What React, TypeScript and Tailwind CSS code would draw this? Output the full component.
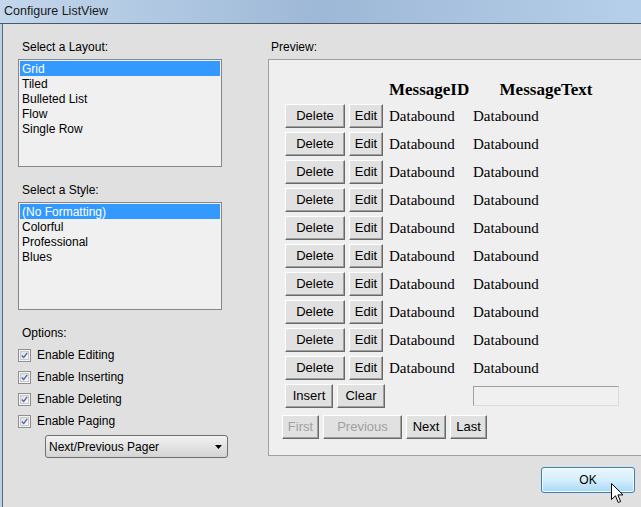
import React from 'react';

const ui = { fontFamily: '"Liberation Sans", Arial, sans-serif' };
const serif = { fontFamily: '"Liberation Serif", "Times New Roman", serif' };

const layouts = ['Grid', 'Tiled', 'Bulleted List', 'Flow', 'Single Row'];
const styles = ['(No Formatting)', 'Colorful', 'Professional', 'Blues'];
const options = ['Enable Editing', 'Enable Inserting', 'Enable Deleting', 'Enable Paging'];

const ListBox: React.FC<{ items: string[] }> = ({ items }) => (
  <div className="w-[204px] h-[108px] border border-[#828790] bg-[#f0f0f0] p-px">
    {items.map((item, i) => (
      <div
        key={item}
        className={`h-[15px] leading-[16px] pl-[2px] text-[12px] ${i === 0 ? 'bg-[#3399ff] text-white' : 'text-black'}`}
      >
        {item}
      </div>
    ))}
  </div>
);

const CheckBox: React.FC = () => (
  <div className="w-[13px] h-[13px] border border-[#8f8f8f] bg-[#f4f4f4] flex items-center justify-center shrink-0">
    <div className="w-[9px] h-[9px] border border-[#c9c9c9] bg-linear-to-br from-[#dcdcdc] to-[#fbfbfb] flex items-center justify-center">
      <svg width="9" height="9" viewBox="0 0 9 9">
        <path d="M1 4.5 L3.5 7 L8 1" fill="none" stroke="#4a62b0" strokeWidth="1.6" />
      </svg>
    </div>
  </div>
);

// classic outset button as shown in the designer preview
const Btn: React.FC<{ w: string; label: string; disabled?: boolean; cls?: string }> = ({ w, label, disabled, cls }) => (
  <div
    className={`${w} ${cls ?? ''} h-[24px] shrink-0 flex items-center justify-center bg-[#e1e1e1] border border-t-white border-l-white border-r-[#696969] border-b-[#696969] shadow-[inset_-1px_-1px_0_#a0a0a0] text-[13px] ${disabled ? 'text-[#a0a0a0]' : 'text-black'}`}
  >
    {label}
  </div>
);

const App: React.FC = () => {
  return (
    <div className="w-[641px] h-[507px] overflow-hidden relative flex flex-col bg-[#e0e0e0]" style={ui}>
      {/* title bar */}
      <div className="h-[24px] shrink-0 border-b border-[#4d5866] bg-linear-to-r from-[#c3d7ed] via-[#9db8d6] to-[#b6cfea] flex items-center pl-[4px]">
        <span className="text-[12.5px] text-[#1a1a1a]">Configure ListView</span>
      </div>

      <div className="flex-1 flex">
        <div className="w-[2px] bg-[#bcd0e6] shrink-0" />
        <div className="w-px bg-[#5d6673] shrink-0" />

        <div className="flex-1 flex flex-col min-w-0">
          <div className="flex">
            {/* left column */}
            <div className="w-[265px] shrink-0 pl-[15px] pt-[16px] flex flex-col text-black">
              <div className="h-[15px] leading-[15px] text-[12px] pl-[4px]">Select a Layout:</div>
              <div className="mt-[4px]">
                <ListBox items={layouts} />
              </div>
              <div className="mt-[16px] h-[15px] leading-[15px] text-[12px] pl-[4px]">Select a Style:</div>
              <div className="mt-[4px]">
                <ListBox items={styles} />
              </div>
              <div className="mt-[16px] h-[15px] leading-[15px] text-[12px] pl-[4px]">Options:</div>
              {options.map((o) => (
                <div key={o} className="mt-[6px] h-[16px] flex items-center gap-[6px]">
                  <CheckBox />
                  <span className="text-[12px]">{o}</span>
                </div>
              ))}
              <div className="mt-[6px] ml-[27px] w-[183px] h-[23px] rounded-[3px] border border-[#707070] bg-linear-to-b from-[#f2f2f2] to-[#d4d4d4] flex items-center justify-between pl-[3px] pr-[5px]">
                <span className="text-[12px]">Next/Previous Pager</span>
                <svg width="7" height="4" viewBox="0 0 7 4">
                  <path d="M0 0 L7 0 L3.5 4 Z" fill="#000" />
                </svg>
              </div>
            </div>

            {/* preview column */}
            <div className="flex-1 min-w-0 pt-[16px] flex flex-col">
              <div className="h-[15px] leading-[15px] text-[12px] pl-[3px] text-black">Preview:</div>
              <div className="mt-[4px] w-[380px] h-[397px] shrink-0 border border-[#a0a0a0] bg-[#efefef] pl-[16px] pt-[20px]">
                <div className="h-[20px] flex items-center font-bold text-[17px] text-black" style={serif}>
                  <div className="w-[104px]" />
                  <div className="w-[84px]">MessageID</div>
                  <div className="w-[146px] text-center">MessageText</div>
                </div>
                {Array.from({ length: 10 }).map((_, i) => (
                  <div key={i} className="mt-[4px] h-[24px] flex items-center">
                    <Btn w="w-[60px]" label="Delete" />
                    <Btn w="w-[34px]" label="Edit" cls="ml-[4px]" />
                    <div className="ml-[6px] w-[84px] text-[15px] text-black" style={serif}>Databound</div>
                    <div className="w-[146px] text-[15px] text-black" style={serif}>Databound</div>
                  </div>
                ))}
                <div className="mt-[4px] h-[24px] flex items-center">
                  <Btn w="w-[48px]" label="Insert" />
                  <Btn w="w-[48px]" label="Clear" cls="ml-[4px]" />
                  <div className="ml-[88px] w-[146px] h-[20px] border border-t-[#a0a0a0] border-l-[#a0a0a0] border-r-[#dcdcdc] border-b-[#dcdcdc] bg-[#f0f0f0]" />
                </div>
                <div className="mt-[7px] -ml-[3px] h-[24px] flex items-center">
                  <Btn w="w-[37px]" label="First" disabled />
                  <Btn w="w-[79px]" label="Previous" disabled cls="ml-[4px]" />
                  <Btn w="w-[40px]" label="Next" cls="ml-[4px]" />
                  <Btn w="w-[37px]" label="Last" cls="ml-[4px]" />
                </div>
              </div>
            </div>
          </div>

          {/* footer */}
          <div className="mt-[9px] flex justify-end pr-[6px]">
            <div className="w-[94px] h-[26px] rounded-[3px] border border-[#3c7fb1] shadow-[inset_0_0_0_1px_#f4fbff] bg-linear-to-b from-[#eaf6fd] via-[#d4eefc] to-[#a7d9f5] flex items-center justify-center text-[12px] text-black">
              OK
            </div>
          </div>
        </div>
      </div>

      {/* mouse pointer over OK */}
      <svg className="absolute left-[611px] top-[483px]" width="13" height="21" viewBox="0 0 13 21">
        <path d="M0.5 0.5 L0.5 16.5 L4.5 12.8 L7.2 19.5 L9.6 18.5 L6.9 11.9 L12 11.9 Z" fill="#fff" stroke="#000" strokeWidth="1" />
      </svg>
    </div>
  );
};

export default App;
